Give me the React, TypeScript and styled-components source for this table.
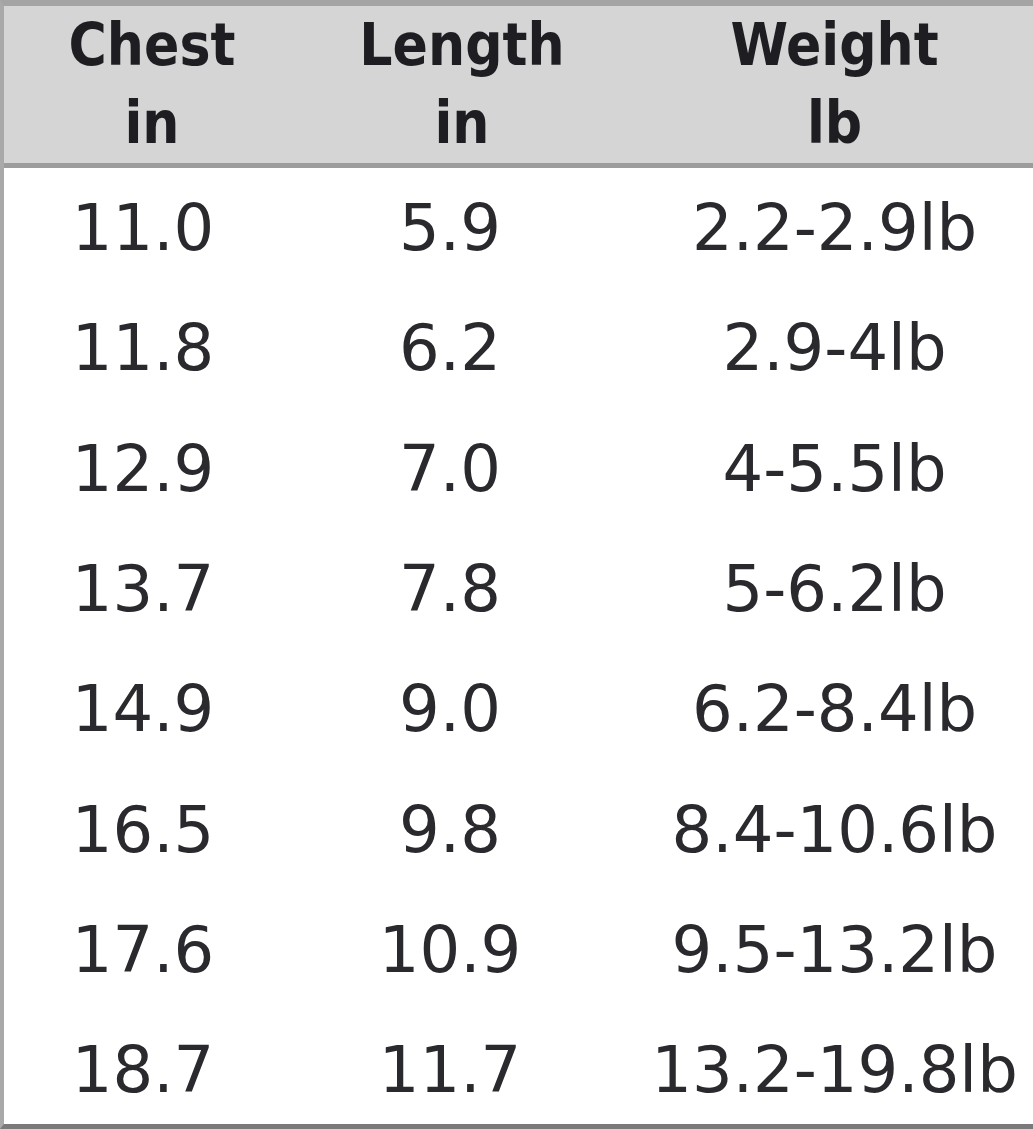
import React, { FC } from 'react'
import styled, { createGlobalStyle } from 'styled-components'

const GlobalStyle = createGlobalStyle`
    html, body {
        margin: 0;
        padding: 0;
        background: #fff;
    }
`

const Table = styled.div`
    width: 1033px;
    height: 1129px;
    box-sizing: border-box;
    border-top: 6px solid #a4a4a4;
    border-left: 4px solid #a9a9a9;
    border-bottom: 5px solid #7a7a7a;
    background: #fff;
    display: flex;
    flex-direction: column;
    overflow: hidden;
`

const Head = styled.div`
    display: grid;
    grid-template-columns: 296px 316px 1fr;
    height: 157px;
    flex-shrink: 0;
    background: #d5d5d5;
    border-bottom: 5px solid #9c9c9c;
`

// shift moves the text centre by that many px (negative = left)
const HeadCell = styled.div<{ shift?: number }>`
    text-align: center;
    padding-left: ${props => Math.max(props.shift || 0, 0) * 2}px;
    padding-right: ${props => Math.max(-(props.shift || 0), 0) * 2}px;
    font-family: 'DejaVu Sans Condensed', 'DejaVu Sans', sans-serif;
    font-stretch: condensed;
    font-weight: bold;
    font-size: 58px;
    line-height: 78px;
    color: #1d1d22;
`

const Body = styled.div`
    flex: 1;
    min-height: 0;
    overflow: hidden;
    display: grid;
    grid-template-columns: 296px 316px 1fr;
    grid-auto-rows: 120.3px;
`

const Cell = styled.div<{ shift?: number }>`
    display: flex;
    align-items: center;
    justify-content: center;
    padding-left: ${props => Math.max(props.shift || 0, 0) * 2}px;
    padding-right: ${props => Math.max(-(props.shift || 0), 0) * 2}px;
    font-family: 'DejaVu Sans', Verdana, sans-serif;
    font-size: 64px;
    color: #2a2a2e;
`

const heads = [
    ['Chest', 'in'],
    ['Length', 'in'],
    ['Weight', 'lb'],
]

const rows = [
    ['11.0', '5.9', '2.2-2.9lb'],
    ['11.8', '6.2', '2.9-4lb'],
    ['12.9', '7.0', '4-5.5lb'],
    ['13.7', '7.8', '5-6.2lb'],
    ['14.9', '9.0', '6.2-8.4lb'],
    ['16.5', '9.8', '8.4-10.6lb'],
    ['17.6', '10.9', '9.5-13.2lb'],
    ['18.7', '11.7', '13.2-19.8lb'],
]

const headShifts = [0, 4, 10]
const cellShifts = [-9, -8, 10]

const App: FC = () => {
    return (
        <>
            <GlobalStyle />
            <Table>
                <Head>
                    {heads.map((h, i) => (
                        <HeadCell key={i} shift={headShifts[i]}>
                            {h[0]}
                            <br />
                            {h[1]}
                        </HeadCell>
                    ))}
                </Head>
                <Body>
                    {rows.map((r, i) =>
                        r.map((v, j) => (
                            <Cell key={i + '-' + j} shift={cellShifts[j]}>
                                {v}
                            </Cell>
                        ))
                    )}
                </Body>
            </Table>
        </>
    )
}

export default App
